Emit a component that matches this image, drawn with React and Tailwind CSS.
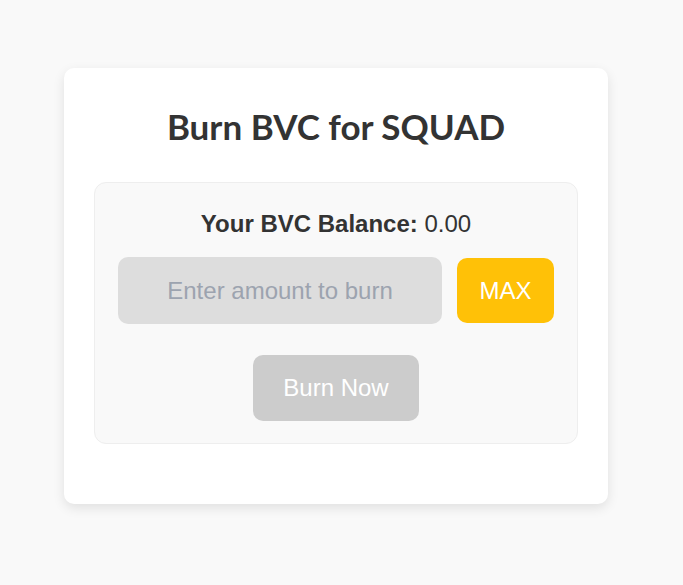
export default function App() {
  return (
    <div className="min-h-[585px] bg-[#f9f9f9] pt-[68px]" style={{ fontFamily: '"Liberation Sans", Arial, sans-serif' }}>
      <div className="ml-[64px] w-[544px] rounded-[10px] bg-white px-[30px] pt-[38px] pb-[60px] shadow-[0_4px_12px_rgba(0,0,0,0.1)]">
        <h1 className="text-center text-[35px] leading-[40px] font-bold text-[#333]" style={{ fontFamily: 'Lato, sans-serif' }}>
          Burn BVC for SQUAD
        </h1>

        <div className="mt-[36px] rounded-[12px] border border-[#eee] bg-[#f9f9f9] px-[23px] pt-[27px] pb-[22px]">
          <p className="text-center text-[24px] leading-[28px] text-[#333]">
            <strong>Your BVC Balance:</strong> 0.00
          </p>

          <div className="mt-[19px] flex items-center gap-[15px]">
            <input
              type="text"
              placeholder="Enter amount to burn"
              className="h-[67px] flex-1 rounded-[10px] bg-[#ddd] text-center text-[24px] text-[#333] placeholder:text-[#9ca3af] outline-none"
            />
            <button className="h-[65px] w-[97px] rounded-[10px] bg-[#ffc107] text-[24px] text-white">MAX</button>
          </div>

          <div className="mt-[31px] flex justify-center">
            <button disabled className="h-[66px] w-[166px] rounded-[10px] bg-[#ccc] text-[24px] text-white">Burn Now</button>
          </div>
        </div>
      </div>
    </div>
  );
}
